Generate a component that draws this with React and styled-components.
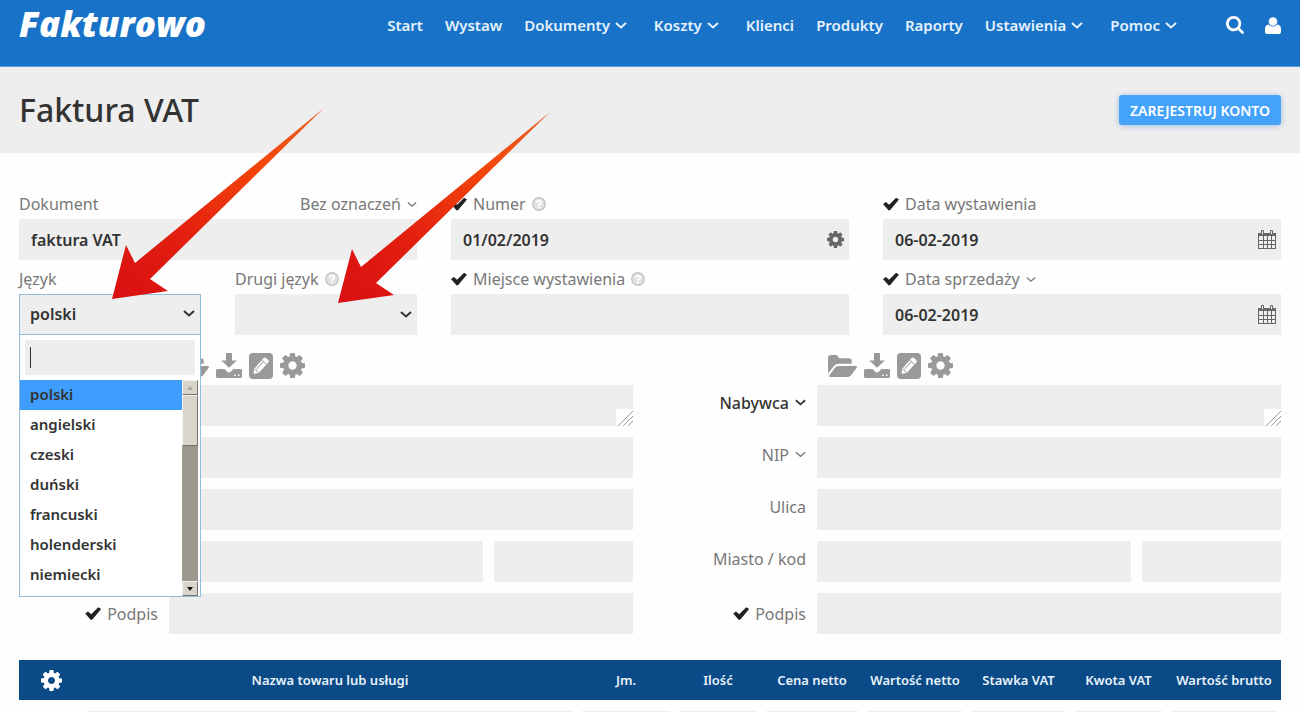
import React from "react";
import styled, { createGlobalStyle, css } from "styled-components";

const GlobalStyle = createGlobalStyle`
  *, *::before, *::after { box-sizing: border-box; }
  html { scrollbar-width: none; }
  body {
    margin: 0;
    background: #fefefe;
    color: #333;
    font-family: "Noto Sans", "Open Sans", sans-serif;
    font-size: 16px;
  }
  button, input, textarea, select { font: inherit; color: inherit; }
`;

const gutter = "19px";

/* ---------- icons ---------- */

const Glyph = styled.svg`
  display: block;
  flex: none;
  width: ${(p) => p.$w}px;
  height: ${(p) => p.$h || p.$w}px;
  fill: currentColor;
`;

const GearIcon = ({ size }) => (
  <Glyph $w={size} viewBox="0 128 1536 1536" aria-hidden="true">
    <path d="M1024 896q0-106-75-181t-181-75-181 75-75 181 75 181 181 75 181-75 75-181zm512-109v222q0 12-8 23t-20 13l-185 28q-19 54-39 91 35 50 107 138 10 12 10 25t-9 23q-27 37-99 108t-94 71q-12 0-26-9l-138-108q-44 23-91 38-16 136-29 186-7 28-36 28h-222q-14 0-24.5-8.500t-11.5-21.500l-28-184q-49-16-90-37l-141 107q-10 9-25 9-14 0-25-11-126-114-165-168-7-10-7-23 0-12 8-23 15-21 51-66.500t54-70.500q-27-50-41-99l-183-27q-13-2-21-12.500t-8-23.500v-222q0-12 8-23t19-13l186-28q14-46 39-92-40-57-107-138-10-12-10-24 0-10 9-23 26-36 98.500-107.500t94.500-71.500q13 0 26 10l138 107q44-23 91-38 16-136 29-186 7-28 36-28h222q14 0 24.500 8.500t11.500 21.500l28 184q49 16 90 37l142-107q9-9 24-9 13 0 25 10 129 119 165 170 7 8 7 22 0 12-8 23-15 21-51 66.500t-54 70.500q26 50 41 98l183 28q13 2 21 12.500t8 23.500z" />
  </Glyph>
);

const SearchIcon = () => (
  <Glyph $w={18} viewBox="64 128 1664 1664" aria-hidden="true">
    <path d="M1216 832q0-185-131.500-316.500t-316.500-131.500-316.500 131.500-131.500 316.500 131.500 316.500 316.500 131.500 316.500-131.500 131.500-316.500zm512 832q0 52-38 90t-90 38q-54 0-90-38l-343-342q-179 124-399 124-143 0-273.500-55.500t-225-150-150-225-55.500-273.500 55.500-273.500 150-225 225-150 273.500-55.500 273.500 55.500 225 150 150 225 55.500 273.500q0 220-124 399l343 343q37 37 37 90z" />
  </Glyph>
);

const UserIcon = () => (
  <Glyph $w={16} $h={17} viewBox="0 0 16 17" aria-hidden="true">
    <circle cx="8" cy="4.500" r="4.300" />
    <path d="M3.500 7.500Q8 11.400 12.500 7.500Q16 8.200 16 12V15Q16 17 14 17H2Q0 17 0 15V12Q0 8.200 3.500 7.500Z" />
  </Glyph>
);

const FolderIcon = () => (
  <Glyph $w={29} $h={22} viewBox="0 256 1880 1280" preserveAspectRatio="none" aria-hidden="true">
    <path d="M1879 952q0 31-31 66l-336 396q-43 51-120.500 86.500t-143.500 35.500h-1088q-34 0-60.500-13t-26.500-43q0-31 31-66l336-396q43-51 120.500-86.500t143.500-35.500h1088q34 0 60.500 13t26.500 43z" />
    <path d="M1536 608v160h-832q-94 0-197 47.500t-164 119.500l-337 396-6 0v-917q0-92 66-125t158-33h260q92 0 158 66t66 126h612q92 0 158 40t58 120z" />
  </Glyph>
);

const DownloadIcon = () => (
  <Glyph $w={26} viewBox="0 0 26 26" aria-hidden="true">
    <path d="M10 0h6v7.500h4.700L13 14.800 5.300 7.500H10z" />
    <path
      fillRule="evenodd"
      d="M1.500 16h7l2.700 2.700q1.800 1.500 3.600 0L17.500 16h7q1.500 0 1.500 1.500v6q0 1.500-1.500 1.500h-23Q0 25 0 23.500v-6Q0 16 1.500 16zM18 21.500v1.500h1.500v-1.500zM22 21.500v1.500h1.500v-1.500z"
    />
  </Glyph>
);

const EditIcon = () => (
  <Glyph $w={24} $h={26} viewBox="0 0 24 26" aria-hidden="true">
    <rect width="24" height="26" rx="4" />
    <path fill="#fff" d="M4.500 21l.8-5.200L14.600 5q1-1 2.200-.1l2.500 2.200q1 1 .1 2.200L10 19.800z" />
    <path fill="none" stroke="#999" strokeWidth="1" d="M12.700 7.200l4.700 4M5.600 16l4 3.600M7.300 16.500l7-8" />
  </Glyph>
);

const CalendarIcon = () => (
  <Glyph $w={18} $h={19} viewBox="0 0 18 19" aria-hidden="true">
    <rect x="0.500" y="3.500" width="17" height="15" fill="none" stroke="currentColor" />
    <path d="M1 3h16v3H1z" />
    <path fill="none" stroke="currentColor" strokeWidth="1" d="M1 10.500h16M1 14.500h16M5.500 6v13M9.500 6v13M13.500 6v13" />
    <path fill="#eee" stroke="currentColor" strokeWidth="1" d="M3.500.5h2v4h-2zM12.500.5h2v4h-2z" />
  </Glyph>
);

const HelpIcon = () => (
  <Glyph $w={14} viewBox="0 0 14 14" aria-hidden="true">
    <circle cx="7" cy="7" r="6.200" fill="#e2e2e2" stroke="#c4c4c4" strokeWidth="1.400" />
    <path fill="none" stroke="#fff" strokeWidth="1.800" d="M4.800 5.600Q4.900 3.700 7 3.700t2.200 1.700Q9.200 6.700 7 7.800v.9M7 9.600v1.600" />
  </Glyph>
);

const Chevron = ({ width = 12, stroke = 2 }) => (
  <Glyph $w={width} $h={7} viewBox="0 0 12 7" aria-hidden="true">
    <path fill="none" stroke="currentColor" strokeWidth={stroke} d="M1 1l5 4.500L11 1" />
  </Glyph>
);

/* ---------- header ---------- */

const TopBar = styled.header`
  display: flex;
  align-items: center;
  justify-content: space-between;
  height: 67px;
  padding: 0 ${gutter} 16px;
  background: #1873c8;
  border-bottom: 1px solid #5d9bd6;
  color: #fff;
`;

const Logo = styled.a`
  color: #fff;
  font: italic 800 35px/42px "Open Sans", "Noto Sans", sans-serif;
  padding-bottom: 2px;
  text-decoration: none;
`;

const Nav = styled.nav`
  display: flex;
  align-items: center;
  gap: 22px;
`;

const NavLink = styled.a`
  display: flex;
  align-items: center;
  gap: 5px;
  margin-right: ${(p) => (p.$menu ? "5px" : 0)};
  color: #e4f1fc;
  font-size: 15px;
  font-weight: 600;
  line-height: 24px;
  text-decoration: none;
`;

const NavTools = styled.div`
  display: flex;
  align-items: center;
  gap: 21px;
  margin-left: 22px;
`;

const IconButton = styled.button`
  display: flex;
  padding: 0;
  border: 0;
  background: none;
  cursor: pointer;
`;

const TitleBar = styled.section`
  display: flex;
  align-items: center;
  justify-content: space-between;
  height: 86px;
  padding: 0 ${gutter};
  background: #eee;
`;

const Title = styled.h1`
  margin: 0;
  color: #333;
  font-size: 32px;
  font-weight: 500;
  line-height: 44px;
`;

const RegisterButton = styled.button`
  height: 30px;
  padding: 0 11px;
  border: 0;
  border-radius: 3px;
  background: #45a2fb;
  box-shadow: 0 1px 6px rgba(69, 130, 200, 0.45);
  color: #fff;
  font-size: 14px;
  font-weight: 600;
  text-transform: uppercase;
`;

/* ---------- form ---------- */

const Form = styled.form`
  position: relative;
  padding: 39px ${gutter} 0;
`;

const DocumentGrid = styled.div`
  display: grid;
  grid-template-columns: repeat(3, 1fr);
  gap: 7px 34px;
`;

const LanguagePair = styled.div`
  display: grid;
  grid-template-columns: 1fr 1fr;
  gap: 34px;
`;

const Field = styled.div`
  display: flex;
  flex-direction: column;
  gap: 3px;
  min-width: 0;
`;

const FieldHead = styled.div`
  display: flex;
  align-items: center;
  gap: 6px;
  height: 24px;
  color: #787878;
  line-height: 24px;
`;

const LabelMenu = styled.button`
  display: flex;
  align-items: center;
  gap: 6px;
  padding: 0;
  border: 0;
  background: none;
  color: ${(p) => (p.$strong ? "#333" : "#787878")};
  font-weight: ${(p) => (p.$strong ? 500 : 400)};
  white-space: nowrap;
`;

const PushRight = styled.div`
  margin-left: auto;
`;

const Tick = styled.input.attrs({ type: "checkbox", defaultChecked: true })`
  appearance: none;
  flex: none;
  width: 16px;
  height: 13px;
  margin: 0;
  background: #222;
  clip-path: polygon(0 50%, 18% 34%, 38% 56%, 82% 2%, 100% 16%, 44% 98%, 34% 98%);
`;

const controlStyle = css`
  display: block;
  width: 100%;
  min-width: 0;
  height: 41px;
  margin: 0;
  padding: 0 12px;
  border: 0;
  border-radius: 0;
  outline: 0;
  background: #eee;
  color: #333;
  font-size: 16px;
  font-weight: 600;
`;

const TextInput = styled.input`
  ${controlStyle}
`;

const PostCodeInput = styled(TextInput)`
  flex: 0 0 30%;
`;

const TextArea = styled.textarea`
  ${controlStyle}
  resize: none;
`;

const PlainSelect = styled.select`
  ${controlStyle}
  appearance: none;
`;

const ControlBox = styled.div`
  position: relative;
`;

const ControlIcon = styled.span`
  position: absolute;
  top: 0;
  bottom: 0;
  right: 5px;
  display: flex;
  align-items: center;
  color: ${(p) => p.$color || "#666"};
`;

const Resizer = styled.svg`
  position: absolute;
  right: 0;
  bottom: 0;
  width: 17px;
  height: 17px;
  background: #fff;
`;

/* ---------- language picker ---------- */

const pickerBorder = "1px solid #8fbfdc";

const PickerTrigger = styled.button`
  ${controlStyle}
  display: flex;
  align-items: center;
  justify-content: space-between;
  padding: 0 5px 2px 10px;
  border: ${pickerBorder};
`;

const PickerPopup = styled.div`
  position: absolute;
  z-index: 2;
  top: 100%;
  left: 0;
  right: 0;
  margin-top: -1px;
  border: ${pickerBorder};
  background: #fff;
`;

const PickerSearch = styled.div`
  position: relative;
  padding: 5px;

  &::after {
    content: "";
    position: absolute;
    top: 12px;
    left: 10px;
    width: 1px;
    height: 21px;
    background: #333;
  }
`;

const PickerInput = styled(TextInput)`
  height: 35px;
`;

const PickerBody = styled.div`
  display: flex;
  height: 216px;
  padding-right: 2px;
`;

const OptionList = styled.ul`
  flex: 1;
  margin: 0;
  padding: 0;
  overflow: hidden;
  list-style: none;
`;

const Option = styled.li`
  height: 30px;
  padding-left: 10px;
  background: ${(p) => (p.$active ? "#3f9efd" : "transparent")};
  color: #333;
  font-size: 15px;
  font-weight: 600;
  line-height: 28px;
`;

const ScrollTrack = styled.div`
  display: flex;
  flex-direction: column;
  width: 16px;
  background: #9b9890;
`;

const scrollPart = css`
  border: 1px solid;
  border-color: #f6f4ee #77746c #77746c #f6f4ee;
  background: #d9d5cc;
`;

const ScrollThumb = styled.div`
  ${scrollPart}
  height: 51px;
`;

const ScrollButton = styled.button`
  ${scrollPart}
  display: flex;
  align-items: center;
  justify-content: center;
  height: 15px;
  padding: 0;
  margin-top: ${(p) => (p.$end ? "auto" : 0)};
  color: ${(p) => (p.$end ? "#111" : "#aaa69c")};
`;

/* ---------- parties ---------- */

const Parties = styled.div`
  display: grid;
  grid-template-columns: 1fr 1fr;
  gap: 34px;
`;

const Party = styled.div`
  min-width: 0;
`;

const PartyTools = styled.div`
  display: flex;
  align-items: center;
  gap: 7px;
  height: 50px;
  padding: 11px 0 0 161px;
  color: #999;
`;

const PartyRows = styled.div`
  display: flex;
  flex-direction: column;
  gap: 11px;
`;

const PartyRow = styled.div`
  display: flex;
  align-items: center;
`;

const PartyLabel = styled.div`
  display: flex;
  flex: 0 0 150px;
  align-items: center;
  justify-content: flex-end;
  gap: 6px;
  padding: 0 11px ${(p) => (p.$level ? 0 : "6px")} 0;
  color: #787878;
  line-height: 24px;
  white-space: nowrap;
`;

const PartyControl = styled.div`
  position: relative;
  display: flex;
  flex: 1;
  gap: 11px;
  min-width: 0;
`;

/* ---------- items table ---------- */

const ItemsTable = styled.table`
  width: 100%;
  margin-top: 26px;
  border-collapse: collapse;
  table-layout: fixed;
`;

const Head = styled.th`
  width: ${(p) => (p.$w ? `${p.$w}px` : "auto")};
  height: 40px;
  padding: 0;
  background: #0a4a87;
  color: #e8f2fa;
  font-size: 13px;
  font-weight: 600;
  text-align: center;
  white-space: nowrap;
`;

const HeadButton = styled(IconButton)`
  margin: 0 auto;
  color: #fff;
`;

const Cell = styled.td`
  padding: 11px 5px 0;
`;

/* ---------- pointer arrows ---------- */

const Arrows = styled.svg`
  position: absolute;
  z-index: 3;
  top: -45px;
  left: 111px;
  width: 440px;
  height: 196px;
  pointer-events: none;
`;

const arrowShape = "M213 0L24 155L15 137L1 191L57 183L39 171Z";

/* ---------- content ---------- */

const navItems = [
  ["Start"],
  ["Wystaw"],
  ["Dokumenty", true],
  ["Koszty", true],
  ["Klienci"],
  ["Produkty"],
  ["Raporty"],
  ["Ustawienia", true],
  ["Pomoc", true],
];

const languages = ["polski", "angielski", "czeski", "duński", "francuski", "holenderski", "niemiecki"];

const columns = [
  ["Nazwa towaru lub usługi"],
  ["Jm.", 98],
  ["Ilość", 86],
  ["Cena netto", 102],
  ["Wartość netto", 104],
  ["Stawka VAT", 103],
  ["Kwota VAT", 97],
  ["Wartość brutto", 114],
];

const TickLabel = ({ id, children }) => (
  <>
    <Tick id={`${id}-on`} aria-label={`${children}: pokaż`} />
    <label htmlFor={id}>{children}</label>
  </>
);

const LanguagePicker = () => (
  <Field>
    <FieldHead>
      <label htmlFor="jezyk">Język</label>
    </FieldHead>
    <ControlBox>
      <PickerTrigger id="jezyk" type="button" aria-haspopup="listbox" aria-expanded="true">
        polski
        <Chevron />
      </PickerTrigger>
      <PickerPopup>
        <PickerSearch>
          <PickerInput aria-label="Szukaj języka" />
        </PickerSearch>
        <PickerBody>
          <OptionList role="listbox" aria-label="Język">
            {languages.map((name, i) => (
              <Option key={name} role="option" aria-selected={i === 0} $active={i === 0}>
                {name}
              </Option>
            ))}
          </OptionList>
          <ScrollTrack>
            <ScrollButton type="button" aria-label="W górę">
              <Glyph $w={6} $h={4} viewBox="0 0 6 4"><path d="M0 4l3-4 3 4z" /></Glyph>
            </ScrollButton>
            <ScrollThumb />
            <ScrollButton type="button" aria-label="W dół" $end>
              <Glyph $w={6} $h={4} viewBox="0 0 6 4"><path d="M0 0l3 4 3-4z" /></Glyph>
            </ScrollButton>
          </ScrollTrack>
        </PickerBody>
      </PickerPopup>
    </ControlBox>
  </Field>
);

const PartyForm = ({ id, labelled }) => (
  <Party>
    <PartyTools>
      <IconButton type="button" aria-label="Otwórz"><FolderIcon /></IconButton>
      <IconButton type="button" aria-label="Pobierz"><DownloadIcon /></IconButton>
      <IconButton type="button" aria-label="Edytuj"><EditIcon /></IconButton>
      <IconButton type="button" aria-label="Opcje"><GearIcon size={25} /></IconButton>
    </PartyTools>
    <PartyRows>
      <PartyRow>
        <PartyLabel>
          {labelled && <LabelMenu type="button" $strong>Nabywca <Chevron width={11} /></LabelMenu>}
        </PartyLabel>
        <PartyControl>
          <TextArea aria-label={labelled ? "Nabywca" : "Sprzedawca"} />
          <Resizer viewBox="0 0 17 17" aria-hidden="true">
            <path fill="none" stroke="#999" d="M2 17L17 2M7 17L17 7M12 17L17 12" />
          </Resizer>
        </PartyControl>
      </PartyRow>
      <PartyRow>
        <PartyLabel>
          {labelled && <LabelMenu type="button">NIP <Chevron width={11} stroke={1.5} /></LabelMenu>}
        </PartyLabel>
        <PartyControl><TextInput aria-label="NIP" /></PartyControl>
      </PartyRow>
      <PartyRow>
        <PartyLabel>{labelled && <label htmlFor={`${id}-ulica`}>Ulica</label>}</PartyLabel>
        <PartyControl><TextInput id={`${id}-ulica`} aria-label="Ulica" /></PartyControl>
      </PartyRow>
      <PartyRow>
        <PartyLabel>{labelled && <label htmlFor={`${id}-miasto`}>Miasto / kod</label>}</PartyLabel>
        <PartyControl>
          <TextInput id={`${id}-miasto`} aria-label="Miasto" />
          <PostCodeInput aria-label="Kod" />
        </PartyControl>
      </PartyRow>
      <PartyRow>
        <PartyLabel $level><TickLabel id={`${id}-podpis`}>Podpis</TickLabel></PartyLabel>
        <PartyControl><TextInput id={`${id}-podpis`} /></PartyControl>
      </PartyRow>
    </PartyRows>
  </Party>
);

export default function App() {
  return (
    <>
      <GlobalStyle />
      <TopBar>
        <Logo href="#">Fakturowo</Logo>
        <Nav>
          {navItems.map(([name, menu]) => (
            <NavLink key={name} href="#" $menu={menu}>
              {name}
              {menu && <Chevron />}
            </NavLink>
          ))}
          <NavTools>
            <IconButton type="button" aria-label="Szukaj"><SearchIcon /></IconButton>
            <IconButton type="button" aria-label="Konto"><UserIcon /></IconButton>
          </NavTools>
        </Nav>
      </TopBar>

      <TitleBar>
        <Title>Faktura VAT</Title>
        <RegisterButton type="button">Zarejestruj konto</RegisterButton>
      </TitleBar>

      <Form>
        <DocumentGrid>
          <Field>
            <FieldHead>
              <label htmlFor="dokument">Dokument</label>
              <PushRight>
                <LabelMenu type="button">Bez oznaczeń <Chevron width={10} stroke={1.5} /></LabelMenu>
              </PushRight>
            </FieldHead>
            <TextInput id="dokument" defaultValue="faktura VAT" />
          </Field>
          <Field>
            <FieldHead>
              <TickLabel id="numer">Numer</TickLabel>
              <HelpIcon />
            </FieldHead>
            <ControlBox>
              <TextInput id="numer" defaultValue="01/02/2019" />
              <ControlIcon><GearIcon size={17} /></ControlIcon>
            </ControlBox>
          </Field>
          <Field>
            <FieldHead><TickLabel id="wystawienie">Data wystawienia</TickLabel></FieldHead>
            <ControlBox>
              <TextInput id="wystawienie" defaultValue="06-02-2019" />
              <ControlIcon><CalendarIcon /></ControlIcon>
            </ControlBox>
          </Field>

          <LanguagePair>
            <LanguagePicker />
            <Field>
              <FieldHead>
                <label htmlFor="drugi">Drugi język</label>
                <HelpIcon />
              </FieldHead>
              <ControlBox>
                <PlainSelect id="drugi" />
                <ControlIcon $color="#333"><Chevron /></ControlIcon>
              </ControlBox>
            </Field>
          </LanguagePair>
          <Field>
            <FieldHead>
              <TickLabel id="miejsce">Miejsce wystawienia</TickLabel>
              <HelpIcon />
            </FieldHead>
            <TextInput id="miejsce" />
          </Field>
          <Field>
            <FieldHead>
              <TickLabel id="sprzedaz">Data sprzedaży</TickLabel>
              <Chevron width={10} stroke={1.5} />
            </FieldHead>
            <ControlBox>
              <TextInput id="sprzedaz" defaultValue="06-02-2019" />
              <ControlIcon><CalendarIcon /></ControlIcon>
            </ControlBox>
          </Field>
        </DocumentGrid>

        <Parties>
          <PartyForm id="sprzedawca" />
          <PartyForm id="nabywca" labelled />
        </Parties>

        <ItemsTable>
          <thead>
            <tr>
              <Head $w={64}>
                <HeadButton type="button" aria-label="Ustawienia tabeli"><GearIcon size={21} /></HeadButton>
              </Head>
              {columns.map(([name, w]) => (
                <Head key={name} $w={w}>{name}</Head>
              ))}
            </tr>
          </thead>
          <tbody>
            <tr>
              <Cell />
              {columns.map(([name]) => (
                <Cell key={name}><TextInput aria-label={name} /></Cell>
              ))}
            </tr>
          </tbody>
        </ItemsTable>

        <Arrows viewBox="0 0 440 196" aria-hidden="true">
          <defs>
            <linearGradient id="arrowFill" x1="0" y1="1" x2="1" y2="0">
              <stop offset="0" stopColor="#d80f12" />
              <stop offset="0.350" stopColor="#e3200f" />
              <stop offset="0.700" stopColor="#f4460a" />
              <stop offset="1" stopColor="#e8642c" />
            </linearGradient>
          </defs>
          <path d={arrowShape} fill="url(#arrowFill)" />
          <path d={arrowShape} fill="url(#arrowFill)" transform="translate(226 4)" />
        </Arrows>
      </Form>
    </>
  );
}
